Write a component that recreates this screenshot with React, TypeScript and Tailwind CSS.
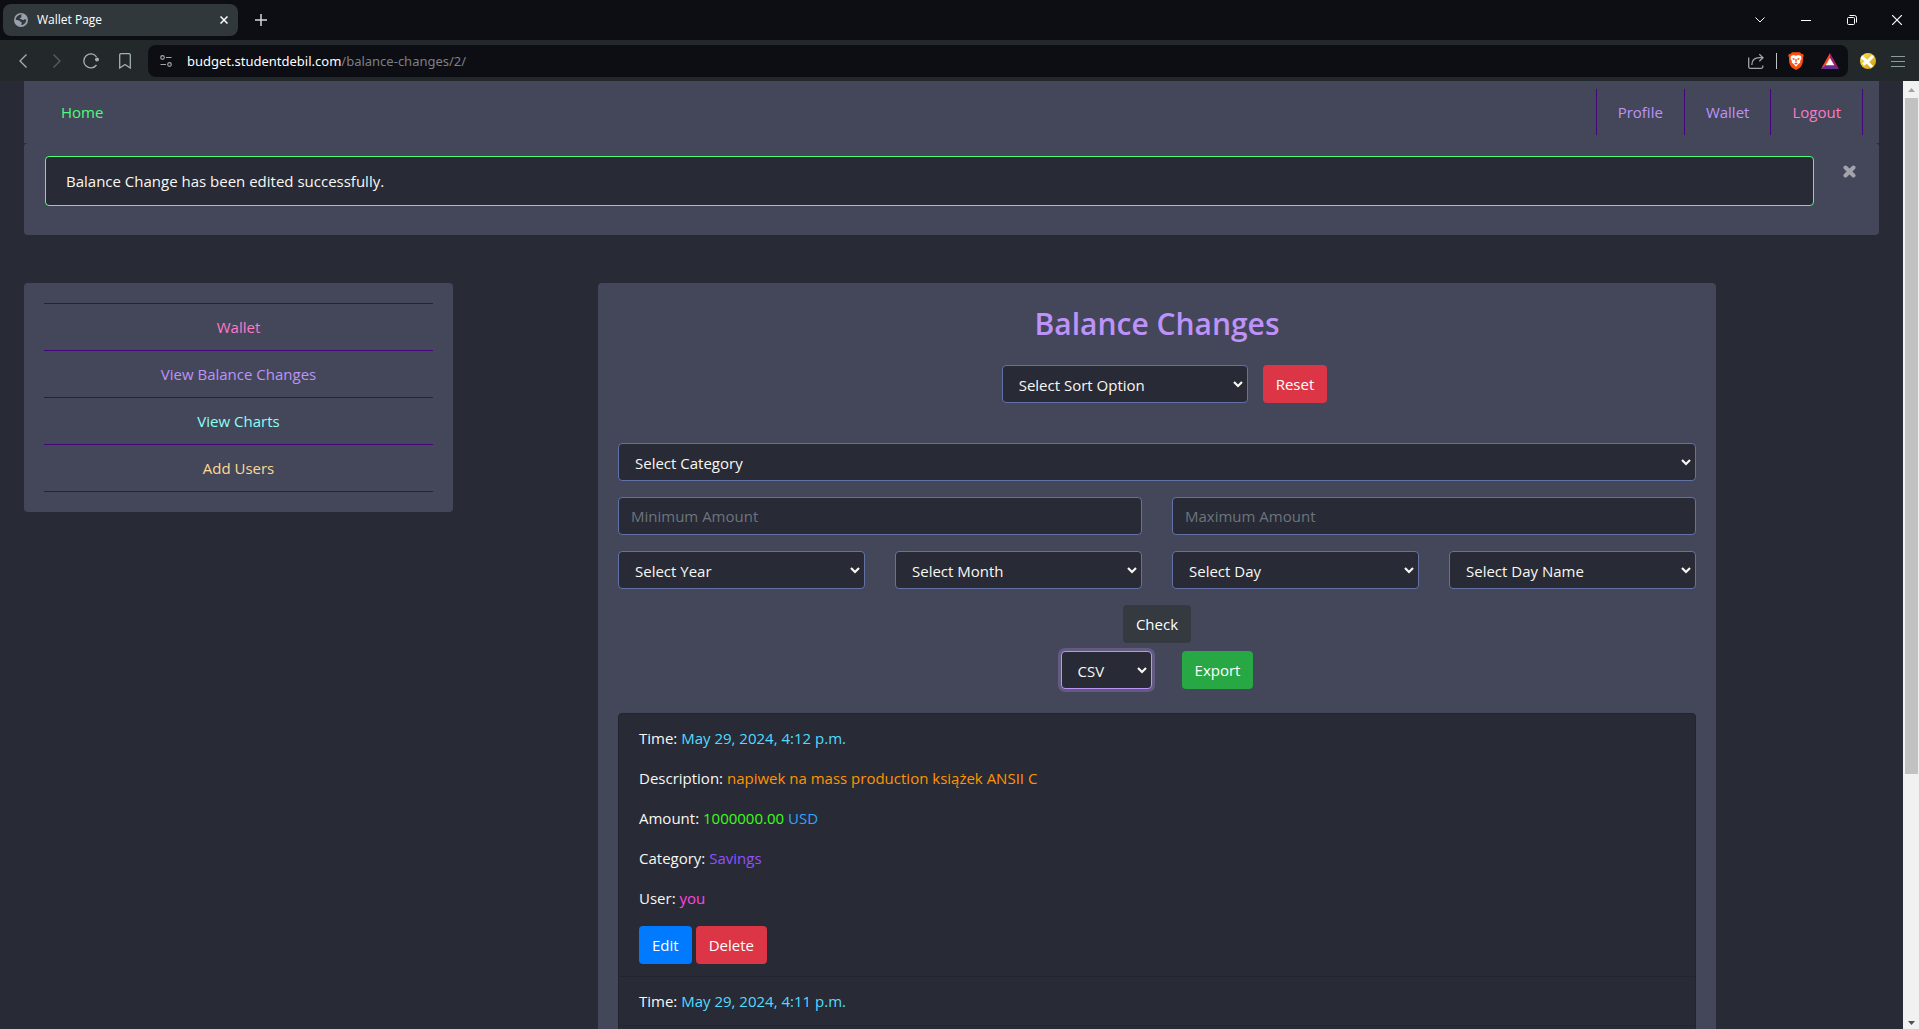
import React from "react";

function SelectBox({
  label,
  className = "",
  focused = false,
}: {
  label: string;
  className?: string;
  focused?: boolean;
}) {
  return (
    <div className={`relative ${className}`}>
      <select
        aria-label={label}
        className={`block h-[38px] w-full appearance-none rounded border bg-[#282a36] pl-4 pr-6 pt-px text-[#f8f8f2] outline-none ${
          focused ? "border-[#bd93f9] ring-3 ring-[#bd93f9]/25" : "border-[#6272a4]"
        }`}
      >
        <option>{label}</option>
      </select>
      <svg viewBox="0 0 10 7" className="pointer-events-none absolute right-[5px] top-4 h-[7px] w-[10px]">
        <path d="M1 1l4 4 4-4" fill="none" stroke="#f8f8f2" strokeWidth="2.2" />
      </svg>
    </div>
  );
}

function AmountInput({ label }: { label: string }) {
  return (
    <input
      type="text"
      aria-label={label}
      placeholder={label}
      className="h-[38px] w-full rounded border border-[#6272a4] bg-[#282a36] px-3 text-[#f8f8f2] outline-none placeholder:text-[#6c757d]"
    />
  );
}

function Btn({ children, className }: { children: React.ReactNode; className: string }) {
  return <button className={`h-[38px] rounded px-[13px] text-white ${className}`}>{children}</button>;
}

function BrowserTabs() {
  return (
    <div className="flex h-10 shrink-0 items-center bg-[#0d0e13] pl-[3px] text-white">
      <div className="flex h-8 w-[235px] items-center rounded-lg bg-[#30383c] pl-[11px] pr-[9px]">
        <svg viewBox="0 0 14 14" className="h-[14px] w-[14px]">
          <circle cx="7" cy="7" r="7" fill="#9aa0ad" />
          <path
            d="M8.200 1.600c-.9.5-1.200 1-.8 1.800.3.7-.3 1.300-1.100 1.400-.5.1-.6.7-.3 1 .5.4 1.600.3 2.200.9.7.7 1.400.3 1.900-.2.5-.5 1.300-.3 2.200.3-.1 2.500-2 4.900-4.700 5.300-.6-.3-.5-1 0-1.600.5-.7.2-1.300-.6-1.500-1.200-.3-1.500-1.500-2.700-1.700-1-.2-1.900-.2-2.600-.6C1.800 4 4.600 1.300 8.200 1.600z"
            fill="#30383c"
          />
        </svg>
        <span className="ml-[9px] flex-1 text-[12px] font-medium">Wallet Page</span>
        <button aria-label="Close tab" className="p-px">
          <svg viewBox="0 0 8 8" className="h-2 w-2">
            <path d="M.5.5l7 7M7.500.5l-7 7" stroke="#fff" strokeWidth="1.500" />
          </svg>
        </button>
      </div>
      <button aria-label="New tab" className="ml-[17px]">
        <svg viewBox="0 0 12 12" className="h-3 w-3">
          <path d="M6 0v12M0 6h12" stroke="#d5d8da" strokeWidth="1.500" />
        </svg>
      </button>
      <div className="ml-auto flex items-center">
        <button aria-label="Search tabs" className="grid h-10 w-[46px] place-items-center">
          <svg viewBox="0 0 10 6" className="h-[6px] w-[10px]">
            <path d="M.5.5L5 5l4.500-4.500" fill="none" stroke="#fff" />
          </svg>
        </button>
        <button aria-label="Minimize" className="grid h-10 w-[46px] place-items-center">
          <span className="h-px w-[10px] bg-white" />
        </button>
        <button aria-label="Restore" className="grid h-10 w-[46px] place-items-center">
          <svg viewBox="0 0 10 10" className="h-[10px] w-[10px]" fill="none" stroke="#fff">
            <rect x=".5" y="2.500" width="7" height="7" rx="1" />
            <path d="M2.500.5h5a2 2 0 0 1 2 2v5" />
          </svg>
        </button>
        <button aria-label="Close" className="grid h-10 w-[44px] place-items-center">
          <svg viewBox="0 0 10 10" className="h-[10px] w-[10px]">
            <path d="M0 0l10 10M10 0L0 10" stroke="#fff" strokeWidth="1.200" />
          </svg>
        </button>
      </div>
    </div>
  );
}

function Toolbar() {
  return (
    <div className="flex h-[41px] shrink-0 items-center bg-[#23282b] pr-[14px]">
      <div className="flex w-[148px] items-center pl-[19px]">
        <button aria-label="Back" className="w-[34px]">
          <svg viewBox="0 0 8 14" className="h-[14px] w-2" fill="none" stroke="#a3b0b6" strokeWidth="1.300">
            <path d="M7.500.5L1 7l6.500 6.500" />
          </svg>
        </button>
        <button aria-label="Forward" className="w-[30px]">
          <svg viewBox="0 0 8 14" className="h-[14px] w-2" fill="none" stroke="#566066" strokeWidth="1.300">
            <path d="M.5.5L7 7 .5 13.500" />
          </svg>
        </button>
        <button aria-label="Reload" className="w-9">
          <svg viewBox="0 0 16 16" className="h-4 w-4">
            <path d="M13.500 3.800A7 7 0 1 0 13.500 12" fill="none" stroke="#a3b0b6" strokeWidth="1.300" />
            <circle cx="14" cy="6.500" r="2" fill="#a3b0b6" />
          </svg>
        </button>
        <button aria-label="Bookmark">
          <svg viewBox="0 0 12 16" className="h-4 w-3">
            <path
              d="M.7 15V2A1.300 1.300 0 0 1 2 .7h8A1.300 1.300 0 0 1 11.300 2v13L6 11.500z"
              fill="none"
              stroke="#a3b0b6"
              strokeWidth="1.300"
            />
          </svg>
        </button>
      </div>
      <div className="flex h-8 flex-1 items-center rounded-lg bg-[#0d0e13] pl-3 pr-[9px]">
        <svg viewBox="0 0 12 12" className="h-3 w-3" fill="none" stroke="#a0a3a8" strokeWidth="1.200">
          <circle cx="2.500" cy="2.500" r="1.800" />
          <path d="M6 2.500h5.500M.5 9.500H6" />
          <circle cx="9.500" cy="9.500" r="1.800" />
        </svg>
        <div className="ml-[15px] flex-1 font-['Noto_Sans',sans-serif] text-[13px] text-[#7d7f83]">
          <span className="text-white">budget.studentdebil.com</span>/balance-changes/2/
        </div>
        <button aria-label="Share">
          <svg viewBox="0 0 16 16" className="h-4 w-4" fill="none" stroke="#a0a3a8" strokeWidth="1.300">
            <path d="M.7 4.500v9.300a1.500 1.500 0 0 0 1.500 1.500h11.100a1.500 1.500 0 0 0 1.500-1.500v-1.300M3.800 12c0-4.500 3-7.300 7.800-7.300H15M11.300 1.300L15 4.700l-3.700 3.500" />
          </svg>
        </button>
        <span className="ml-3 h-4 w-px bg-[#c0c2c5]" />
        <button aria-label="Brave Shields" className="ml-[11px]">
          <svg viewBox="0 0 16 18" className="h-[18px] w-4">
            <path
              d="M4 .3h8L13.400 2l1.300-.2 1.100 2-.8 1.700c.2 5.500-1 8.500-3.500 10.400L8 18l-3.500-2.100C2 14 .8 11 1 5.500L.2 3.800l1.100-2L2.600 2z"
              fill="#ff4e0e"
            />
            <path
              d="M3 4l2.500-.9 2.500.6 2.500-.6L13 4l.5 2.700-1.500 2.500.4 1.400-2 1.400L8 14.800 5.600 12l-2-1.400.4-1.400-1.500-2.500z"
              fill="#fff"
            />
            <path
              d="M4.300 6l2.200.6.3 1-1.500.4zM11.700 6l-2.200.6-.3 1 1.500.4zM7.500 7h1l.4 2.300-.9.700-.9-.7zM6.200 11.200l1.800-.7 1.800.7L8 12.700z"
              fill="#ff4e0e"
            />
          </svg>
        </button>
        <button aria-label="Brave Rewards" className="ml-[17px]">
          <svg viewBox="0 0 18 16" className="h-4 w-[18px]">
            <path d="M9 0L0 16l9-5.500z" fill="#ff4724" />
            <path d="M9 0l9 16-9-5.500z" fill="#9e1f63" />
            <path d="M0 16l5-4h8l5 4z" fill="#662d91" />
            <path d="M9 5l4.300 7.300H4.700z" fill="#fff" />
          </svg>
        </button>
      </div>
      <button aria-label="Extension" className="ml-3">
        <svg viewBox="0 0 16 16" className="h-4 w-4">
          <defs>
            <linearGradient id="gold" x1="0" y1="0" x2="1" y2="1">
              <stop offset="0" stopColor="#ffe45c" />
              <stop offset="1" stopColor="#c99a08" />
            </linearGradient>
            <clipPath id="disc">
              <circle cx="8" cy="8" r="8" />
            </clipPath>
          </defs>
          <circle cx="8" cy="8" r="8" fill="url(#gold)" />
          <g clipPath="url(#disc)" stroke="#fff" strokeWidth="3" fill="none">
            <path d="M1 3.500l5 4 6 6.500M13 3L8 8l-5 3.500" />
          </g>
        </svg>
      </button>
      <button aria-label="Menu" className="ml-[15px]">
        <svg viewBox="0 0 14 12" className="h-3 w-[14px]">
          <path d="M0 1.500h14M0 6.500h14M0 11.500h14" stroke="#8d9aa0" />
        </svg>
      </button>
    </div>
  );
}

function Scrollbar() {
  return (
    <div aria-hidden="true" className="flex w-4 shrink-0 flex-col items-center bg-[#f1f1f1]">
      <svg viewBox="0 0 7 4" className="mb-[6px] mt-[7px] h-1 w-[7px] shrink-0">
        <path d="M0 4L3.500 0 7 4z" fill="#a3a3a3" />
      </svg>
      <div className="flex w-full flex-1 flex-col pl-[2px] pr-px">
        <span className="grow-[73] bg-[#c1c1c1]" />
        <span className="grow-[26]" />
      </div>
      <svg viewBox="0 0 7 4" className="mb-1 mt-[6px] h-1 w-[7px] shrink-0">
        <path d="M0 0h7L3.500 4z" fill="#505050" />
      </svg>
    </div>
  );
}

const topLinks = [
  { text: "Profile", color: "text-[#bd93f9]" },
  { text: "Wallet", color: "text-[#bd93f9]" },
  { text: "Logout", color: "text-[#ff79c6]" },
];

const sideLinks = [
  { text: "Wallet", color: "text-[#ff79c6]" },
  { text: "View Balance Changes", color: "text-[#bd93f9]" },
  { text: "View Charts", color: "text-[#8bfff4]" },
  { text: "Add Users", color: "text-[#ffd892]" },
];

type Change = {
  time: string;
  description?: string;
  amount?: string;
  currency?: string;
  category?: string;
  user?: string;
};

const changes: Change[] = [
  {
    time: "May 29, 2024, 4:12 p.m.",
    description: "napiwek na mass production książek ANSII C",
    amount: "1000000.00",
    currency: "USD",
    category: "Savings",
    user: "you",
  },
  { time: "May 29, 2024, 4:11 p.m." },
];

function Entry({ change }: { change: Change }) {
  return (
    <li className="flex flex-col gap-4 border-b border-[#22242e] px-5 py-3">
      <p>
        Time: <span className="text-[#50dcff]">{change.time}</span>
      </p>
      {change.description && (
        <>
          <p>
            Description: <span className="text-[#ff9500]">{change.description}</span>
          </p>
          <p>
            Amount: <span className="text-[#39ff14]">{change.amount}</span>{" "}
            <span className="text-[#2fa4ff]">{change.currency}</span>
          </p>
          <p>
            Category: <span className="text-[#8f52ff]">{change.category}</span>
          </p>
          <p>
            User: <span className="text-[#ff45e0]">{change.user}</span>
          </p>
          <div className="flex gap-1">
            <Btn className="bg-[#007bff]">Edit</Btn>
            <Btn className="bg-[#dc3545]">Delete</Btn>
          </div>
        </>
      )}
    </li>
  );
}

export default function App() {
  return (
    <div className="flex h-screen flex-col overflow-hidden bg-[#282a36] font-['Open_Sans',sans-serif] text-[15px] leading-6 text-[#f8f8f2]">
      <BrowserTabs />
      <Toolbar />
      <div className="flex min-h-0 flex-1">
        <div className="min-w-0 flex-1 overflow-hidden px-6">
          <nav className="flex h-[62px] items-start bg-[#44475a] pl-[37px] pr-4 pt-2">
            <a href="#home" className="py-[11px] text-[#50fa7b]">
              Home
            </a>
            <ul className="ml-auto flex border-r border-[#44077a]">
              {topLinks.map((l) => (
                <li key={l.text} className="border-l border-[#44077a]">
                  <a href="#nav" className={`block px-[21px] py-[11px] ${l.color}`}>
                    {l.text}
                  </a>
                </li>
              ))}
            </ul>
          </nav>
          <section className="flex h-[92px] items-start rounded bg-[#44475a] pl-[21px] pt-[13px]">
            <div role="alert" className="flex-1 rounded border border-[#50fa7b] bg-[#282a36] px-5 py-3">
              Balance Change has been edited successfully.
            </div>
            <button aria-label="Dismiss" className="ml-[29px] mr-[23px] mt-[9px]">
              <svg viewBox="0 0 13 13" className="h-[13px] w-[13px]">
                <path
                  d="M2.500 2.500l8 8M10.500 2.500l-8 8"
                  stroke="#a2a3ac"
                  strokeWidth="4"
                  strokeLinecap="round"
                />
              </svg>
            </button>
          </section>

          <div className="mt-12 grid grid-cols-[429fr_145fr_1118fr_163fr] items-start">
            <aside className="rounded bg-[#44475a] p-5">
              <ul className="border-t border-[#44077a]">
                {sideLinks.map((l) => (
                  <li key={l.text} className="border-b border-[#44077a] text-center">
                    <a href="#side" className={`block py-[11px] ${l.color}`}>
                      {l.text}
                    </a>
                  </li>
                ))}
              </ul>
            </aside>
            <main className="col-start-3 rounded bg-[#44475a] p-5">
              <h1 className="text-center text-[30px] font-semibold leading-[42px] text-[#bd93f9]">
                Balance Changes
              </h1>
              <div className="ml-[15px] mt-5 flex justify-center gap-[15px]">
                <SelectBox label="Select Sort Option" className="w-[246px]" />
                <Btn className="bg-[#dc3545]">Reset</Btn>
              </div>
              <form className="mt-10 flex flex-col gap-4" onSubmit={(e) => e.preventDefault()}>
                <SelectBox label="Select Category" />
                <div className="grid grid-cols-2 gap-[30px]">
                  <AmountInput label="Minimum Amount" />
                  <AmountInput label="Maximum Amount" />
                </div>
                <div className="grid grid-cols-4 gap-[30px]">
                  <SelectBox label="Select Year" />
                  <SelectBox label="Select Month" />
                  <SelectBox label="Select Day" />
                  <SelectBox label="Select Day Name" />
                </div>
                <Btn className="self-center bg-[#343a40]">Check</Btn>
              </form>
              <div className="mt-2 flex justify-center gap-[30px]">
                <SelectBox label="CSV" focused className="w-[91px]" />
                <Btn className="bg-[#28a745]">Export</Btn>
              </div>
              <ul className="mt-6 rounded border border-[#22242e] bg-[#282a36] pb-12">
                {changes.map((c) => (
                  <Entry key={c.time} change={c} />
                ))}
              </ul>
            </main>
          </div>
        </div>
        <Scrollbar />
      </div>
    </div>
  );
}
